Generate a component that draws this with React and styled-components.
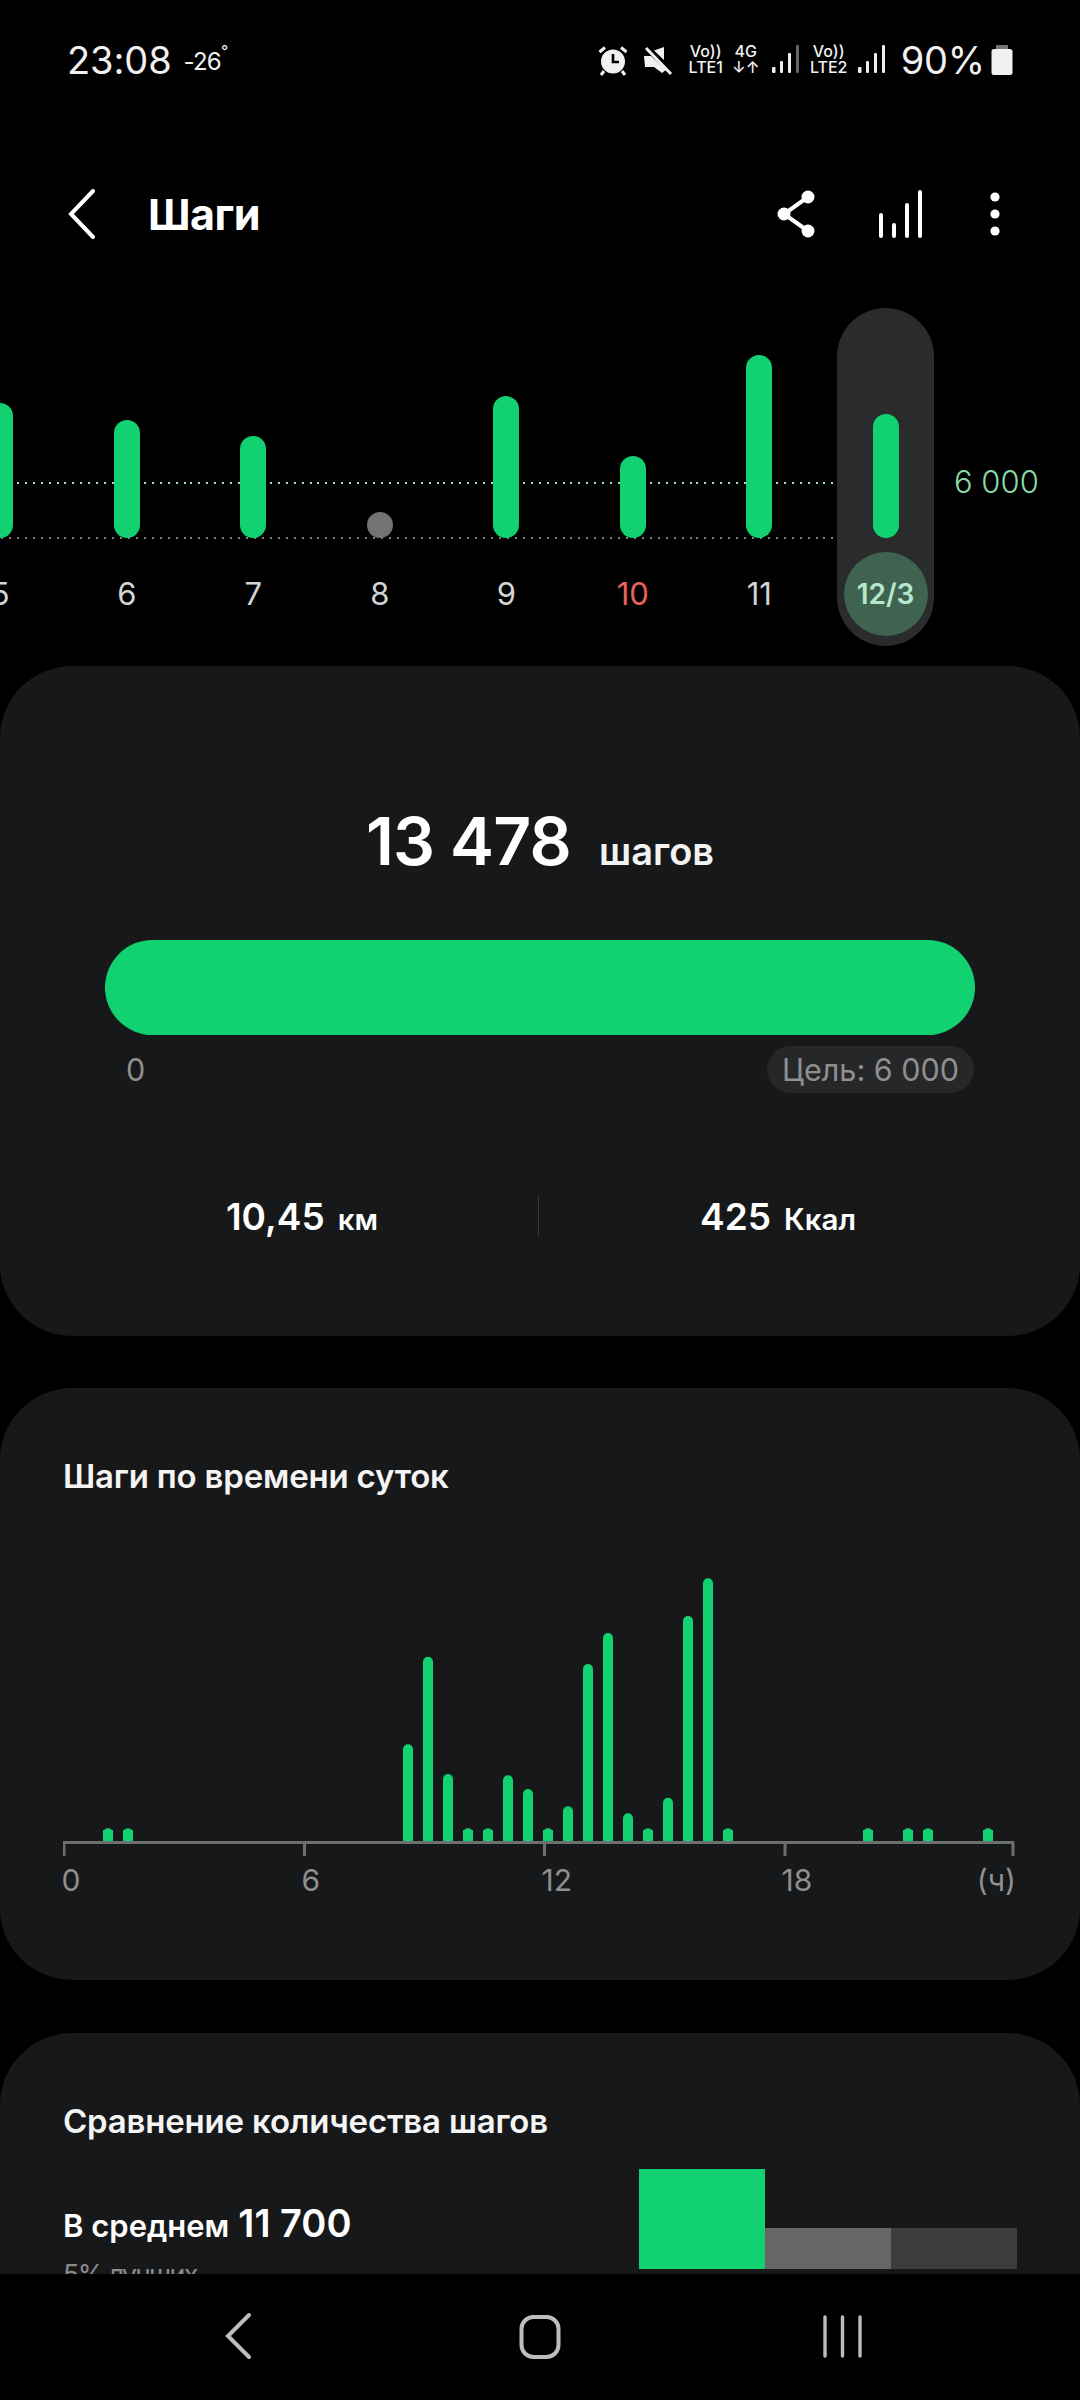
import React from 'react';
import styled, { createGlobalStyle, css } from 'styled-components';

const GREEN = '#12d171';
const FONT = 'Inter, "Noto Sans", Roboto, sans-serif';

const Global = createGlobalStyle`
  html, body { margin: 0; padding: 0; background: #000; }
  body { font-family: ${FONT}; color: #fff; }
  * { box-sizing: border-box; }
`;

const Screen = styled.div`
  width: 1080px;
  height: 2400px;
  background: #000;
  overflow: hidden;
  display: flex;
  flex-direction: column;
`;

const Scroll = styled.div`
  height: 2274px;
  overflow: hidden;
  flex: none;
`;

const Icon = styled.svg`
  display: block;
  flex: none;
  margin-top: ${p => p.$mt || 0}px;
  margin-right: ${p => p.$mr || 0}px;
`;

/* status bar */
const StatusBar = styled.div`
  height: 160px;
  padding: 37px 67px 0 67px;
  display: flex;
  justify-content: space-between;
  align-items: flex-start;
`;
const Clock = styled.div`
  display: flex;
  align-items: flex-start;
  font-size: 38px;
  line-height: 46px;
  font-weight: 400;
  color: #f1f1f1;
  letter-spacing: -0.1px;
`;
const Temp = styled.span`
  font-size: 24px;
  line-height: 46px;
  margin-left: 12px;
  margin-top: 2px;
  letter-spacing: -0.8px;
`;
const Degree = styled.span`
  font-size: 16px;
  line-height: 20px;
  margin-top: 4px;
`;
const StatusRight = styled.div`
  display: flex;
  align-items: flex-start;
  height: 46px;
`;
const Percent = styled.div`
  font-size: 38px;
  line-height: 46px;
  margin: 0 6px 0 14px;
  color: #f1f1f1;
  letter-spacing: -0.2px;
`;
const NetStack = styled.div`
  width: ${p => p.$w}px;
  margin: 7px ${p => p.$mr || 0}px 0 ${p => p.$ml || 0}px;
  display: flex;
  flex-direction: column;
  align-items: center;
  font-size: 16px;
  line-height: 15px;
  font-weight: 500;
  color: #f1f1f1;
  white-space: nowrap;
`;
const NetTop = styled.div`
  height: 16px;
  line-height: 15px;
`;

/* toolbar */
const Toolbar = styled.div`
  height: 108px;
  margin-bottom: 40px;
  padding: 0 0 0 68px;
  display: flex;
  align-items: center;
`;
const ToolTitle = styled.h1`
  margin: 0 0 0 52px;
  font-size: 43px;
  line-height: 50px;
  font-weight: 700;
  letter-spacing: -0.5px;
`;
const ToolIcons = styled.div`
  margin-left: auto;
  margin-right: 80px;
  display: flex;
  align-items: center;
`;

/* week chart */
const dottedLines = css`
  background:
    repeating-linear-gradient(90deg, #a5e0c2 0 2px, transparent 2px 8px) 0 174px / 100% 2px no-repeat,
    repeating-linear-gradient(90deg, #808080 0 2px, transparent 2px 8px) 0 229px / 100% 2px no-repeat;
`;
const Week = styled.div`
  height: 360px;
  margin-top: -2px;
  margin-left: -63px;
  display: flex;
  align-items: flex-start;
  padding-top: 2px;
`;
const Day = styled.div`
  width: 126.5px;
  flex: none;
  height: 338px;
  display: flex;
  flex-direction: column;
  align-items: center;
`;
const ActiveDay = styled(Day)`
  width: 97px;
  background: #2a2b2d;
  border-radius: 49px;
`;
const Plot = styled.div`
  width: 100%;
  height: 232px;
  flex: none;
  display: flex;
  justify-content: center;
  align-items: flex-end;
  ${p => !p.$active && dottedLines}
`;
const PlotFiller = styled.div`
  width: 14.5px;
  height: 232px;
  flex: none;
  ${dottedLines}
`;
const Bar = styled.div`
  width: 26px;
  height: ${p => p.$h}px;
  background: ${p => p.$c || GREEN};
  border-radius: 13px;
  margin-bottom: 2px;
`;
const DayLabel = styled.div`
  height: 106px;
  flex: none;
  display: flex;
  align-items: center;
  justify-content: center;
  font-size: 31px;
  font-weight: 400;
  color: ${p => (p.$red ? '#e8635c' : '#d4d4d4')};
`;
const Selected = styled.div`
  width: 84px;
  height: 84px;
  margin-top: 12px;
  border-radius: 50%;
  background: #3f6350;
  color: #b6e8cd;
  font-size: 28px;
  font-weight: 600;
  display: flex;
  align-items: center;
  justify-content: center;
`;
const Goal = styled.div`
  flex: none;
  margin: 154px 0 0 20px;
  font-size: 31px;
  line-height: 40px;
  color: #88d9a6;
  white-space: nowrap;
  font-weight: 300;
`;

/* cards */
const Card = styled.section`
  background: #17181a;
  border-radius: 72px;
  height: ${p => p.$h}px;
  margin-bottom: ${p => p.$mb || 0}px;
  padding: ${p => p.$pt || 0}px 63px 0;
`;
const Summary = styled.div`
  display: flex;
  justify-content: center;
  align-items: baseline;
`;
const BigNum = styled.span`
  font-size: 66px;
  line-height: 78px;
  font-weight: 600;
  letter-spacing: -0.8px;
`;
const BigUnit = styled.span`
  font-size: 38px;
  font-weight: 600;
  margin-left: 28px;
  color: #f2f2f2;
`;
const Progress = styled.div`
  height: 95px;
  margin: 60px 42px 0;
  border-radius: 48px;
  background: ${GREEN};
`;
const ScaleRow = styled.div`
  margin: 11px 43px 0 63px;
  display: flex;
  justify-content: space-between;
  align-items: center;
  height: 47px;
  font-size: 30.5px;
  color: #8f8f8f;
`;
const GoalPill = styled.div`
  height: 47px;
  padding: 0 15px;
  border-radius: 24px;
  background: #262729;
  display: flex;
  align-items: center;
`;
const Stats = styled.div`
  margin-top: 102px;
  display: flex;
  align-items: center;
  height: 42px;
`;
const Stat = styled.div`
  flex: 1;
  display: flex;
  justify-content: center;
  align-items: baseline;
  gap: 13px;
  font-weight: 600;
`;
const StatNum = styled.span`
  font-size: 37px;
`;
const StatUnit = styled.span`
  font-size: 29.5px;
`;
const VLine = styled.div`
  width: 1px;
  height: 40px;
  margin-left: -3px;
  background: #3a3b3d;
  flex: none;
`;
const CardTitle = styled.h2`
  margin: 0;
  font-size: 33px;
  line-height: 42px;
  font-weight: 600;
  letter-spacing: -0.2px;
  color: #f4f4f4;
`;
const HourChart = styled.svg`
  display: block;
  margin-top: 3px;
`;
const HourLabels = styled.div`
  width: 954.5px;
  margin: 4px 0 0 -1.5px;
  display: grid;
  grid-template-columns: 240px 240px 240px 1fr auto;
  font-size: 30px;
  line-height: 40px;
  color: #8f8f8f;
`;
const CompareRow = styled.div`
  display: flex;
  justify-content: space-between;
  align-items: flex-start;
  margin-top: 27px;
`;
const CompareText = styled.div`
  padding-top: 29px;
`;
const Avg = styled.div`
  display: flex;
  align-items: baseline;
  gap: 9px;
  font-weight: 600;
  font-size: 31px;
  line-height: 50px;
`;
const AvgNum = styled.span`
  font-size: 38px;
`;
const Rank = styled.div`
  margin-top: 7px;
  font-size: 27px;
  line-height: 34px;
  letter-spacing: -1.7px;
  color: #8a8a8a;
`;
const Steps = styled.div`
  display: flex;
  align-items: flex-end;
`;
const Step = styled.div`
  width: 126px;
  height: ${p => p.$h}px;
  background: ${p => p.$c};
`;

/* nav bar */
const NavBar = styled.nav`
  flex: 1;
  background: #000;
`;

const Signal = ({ last }) => (
  <Icon width="30" height="32" viewBox="0 0 30 32" $mt={8}>
    <g fill="#eee">
      <rect x="1" y="22" width="3.5" height="6" rx="1" />
      <rect x="9" y="16" width="3" height="12" rx="1" />
      <rect x="17" y="8" width="3" height="20" rx="1" />
      <rect x="25" y="0" width="3" height="28" rx="1" fill={last} />
    </g>
  </Icon>
);

const hours = [
  [0, 985], [1, 985], [15, 733], [16, 470], [17, 822], [18, 985], [19, 985], [20, 826], [21, 867],
  [22, 985], [23, 919], [24, 492], [25, 399], [26, 940], [27, 985], [28, 893], [29, 348], [30, 235],
  [31, 985], [38, 985], [40, 985], [41, 985], [44, 985],
];

const week = [
  { l: '5', h: 135 },
  { l: '6', h: 118 },
  { l: '7', h: 102 },
  { l: '8', h: 26, c: '#737373' },
  { l: '9', h: 142 },
  { l: '10', h: 82, red: true },
  { l: '11', h: 183 },
];

export default function App() {
  return (
    <Screen>
      <Global />
      <Scroll>
        <StatusBar>
          <Clock>
            23:08<Temp>-26</Temp><Degree>°</Degree>
          </Clock>
          <StatusRight>
            <Icon width="30" height="30" viewBox="0 0 30 30" $mt={9} $mr={15}>
              <circle cx="15" cy="15.5" r="12" fill="#f1f1f1" />
              <path d="M15 8v8h6" stroke="#000" strokeWidth="2.6" fill="none" />
              <path d="M1.5 6 7 1.5M28.5 6 23 1.5M6 25l-3 4M24 25l3 4" stroke="#f1f1f1" strokeWidth="3" fill="none" />
            </Icon>
            <Icon width="30" height="30" viewBox="0 0 30 30" $mt={9} $mr={14}>
              <path d="M21 1v13L11 4.500z M1 10h7l15 14-4 3-8-6H2z" fill="#f1f1f1" />
              <path d="M2 0.500 29 27.500" stroke="#000" strokeWidth="2" />
              <path d="M3 2l25 26" stroke="#f1f1f1" strokeWidth="3" />
            </Icon>
            <NetStack $w={38}>
              <NetTop>Vo))</NetTop>
              <div>LTE1</div>
            </NetStack>
            <NetStack $w={24} $ml={9} $mr={13}>
              <NetTop>4G</NetTop>
              <div>↓↑</div>
            </NetStack>
            <Signal last="#666" />
            <NetStack $w={40} $ml={8} $mr={8}>
              <NetTop>Vo))</NetTop>
              <div>LTE2</div>
            </NetStack>
            <Signal last="#eee" />
            <Percent>90%</Percent>
            <Icon width="22" height="32" viewBox="0 0 22 32" $mt={8}>
              <rect x="5" y="0" width="12" height="6" rx="1" fill="#777" />
              <rect x="0.5" y="4" width="21" height="26" rx="2.5" fill="#f1f1f1" />
            </Icon>
          </StatusRight>
        </StatusBar>

        <Toolbar>
          <Icon width="28" height="50" viewBox="0 0 28 50">
            <path d="M25 2 3 25l22 23" stroke="#fff" strokeWidth="4" fill="none" strokeLinecap="round" />
          </Icon>
          <ToolTitle>Шаги</ToolTitle>
          <ToolIcons>
            <Icon width="44" height="50" viewBox="0 0 44 50" $mr={59}>
              <path d="M33 8 9 25l24 17" stroke="#fff" strokeWidth="4" fill="none" />
              <circle cx="33" cy="8" r="6.500" fill="#fff" />
              <circle cx="9" cy="25" r="6.500" fill="#fff" />
              <circle cx="33" cy="42" r="6.500" fill="#fff" />
            </Icon>
            <Icon width="44" height="50" viewBox="0 0 44 50" $mr={68}>
              <g stroke="#fff" strokeWidth="4" strokeLinecap="round">
                <path d="M3 26v21M16 36v11M29 16v31M42 3v44" />
              </g>
            </Icon>
            <Icon width="10" height="44" viewBox="0 0 10 44">
              <circle cx="5" cy="5" r="4.600" fill="#fff" />
              <circle cx="5" cy="22" r="4.600" fill="#fff" />
              <circle cx="5" cy="39" r="4.600" fill="#fff" />
            </Icon>
          </ToolIcons>
        </Toolbar>

        <Week>
          {week.map(d => (
            <Day key={d.l}>
              <Plot><Bar $h={d.h} $c={d.c} /></Plot>
              <DayLabel $red={d.red}>{d.l}</DayLabel>
            </Day>
          ))}
          <PlotFiller />
          <ActiveDay>
            <Plot $active><Bar $h={124} /></Plot>
            <Selected>12/3</Selected>
          </ActiveDay>
          <Goal>6 000</Goal>
        </Week>

        <Card $h={670} $mb={52} $pt={136}>
          <Summary>
            <BigNum>13 478</BigNum>
            <BigUnit>шагов</BigUnit>
          </Summary>
          <Progress />
          <ScaleRow>
            <span>0</span>
            <GoalPill>Цель: 6 000</GoalPill>
          </ScaleRow>
          <Stats>
            <Stat><StatNum>10,45</StatNum><StatUnit>км</StatUnit></Stat>
            <VLine />
            <Stat><StatNum>425</StatNum><StatUnit>Ккал</StatUnit></Stat>
          </Stats>
        </Card>

        <Card $h={592} $mb={53} $pt={67}>
          <CardTitle>Шаги по времени суток</CardTitle>
          <HourChart width="960" height="356" viewBox="0 0 960 356">
            <g fill={GREEN}>
              {hours.map(([k, top]) => {
                const h = (1026 - top) / 3;
                return <rect key={k} x={40 + 20 * k} y={342 - h} width="10" height={h + 1} rx="5" />;
              })}
              {hours.map(([k]) => (
                <rect key={`b${k}`} x={40 + 20 * k} y={330} width="10" height={12} />
              ))}
            </g>
            <g stroke="#6e6e6e" strokeWidth="3">
              <path d="M0 342.500h951" />
              <path d="M1 342v14M241.500 342v14M481.500 342v14M722 342v14M950 342v14" />
            </g>
          </HourChart>
          <HourLabels>
            <span>0</span>
            <span>6</span>
            <span>12</span>
            <span>18</span>
            <span>(ч)</span>
          </HourLabels>
        </Card>

        <Card $h={400} $pt={67}>
          <CardTitle>Сравнение количества шагов</CardTitle>
          <CompareRow>
            <CompareText>
              <Avg>В среднем <AvgNum>11 700</AvgNum></Avg>
              <Rank>5% лучших</Rank>
            </CompareText>
            <Steps>
              <Step $h={100} $c={GREEN} />
              <Step $h={41} $c="#666666" />
              <Step $h={41} $c="#3c3c3e" />
            </Steps>
          </CompareRow>
        </Card>
      </Scroll>

      <NavBar>
        <Icon width="1080" height="126" viewBox="0 0 1080 126">
          <path d="M249 41 228 62l21 21" stroke="#bdbdbd" strokeWidth="4" fill="none" strokeLinecap="round" />
          <rect x="521.500" y="43" width="37" height="40" rx="12" stroke="#bdbdbd" strokeWidth="4" fill="none" />
          <path d="M825 43v39M842.500 43v39M860 43v39" stroke="#bdbdbd" strokeWidth="3.400" fill="none" strokeLinecap="round" />
        </Icon>
      </NavBar>
    </Screen>
  );
}
